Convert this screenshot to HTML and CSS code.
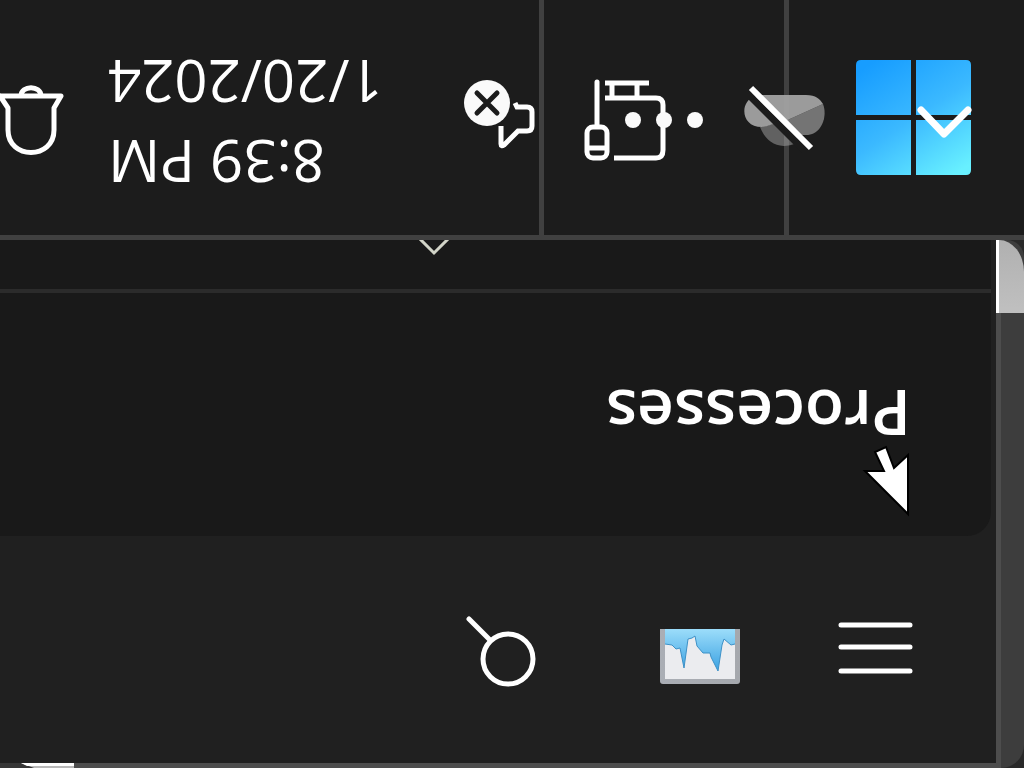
FILE: index.html
```html
<!DOCTYPE html>
<html lang="en">
<head>
<meta charset="utf-8">
<meta name="viewport" content="width=device-width, initial-scale=1">
<title>Task Manager</title>
<link rel="stylesheet" href="styles.css">
</head>
<body>
<div class="screen">
  <header class="taskbar">
    <div class="cell cell-clock">
      <button class="icon-button bell" aria-label="Notifications">
        <svg width="64" height="74" viewBox="0 0 64 74" fill="none" stroke="#fff" stroke-width="5" stroke-linejoin="round" stroke-linecap="round"><path d="M21 15C21 4 41 4 41 15M-2 15H61L54 27V49C54 79 8 79 8 49V27L0 15"/></svg>
      </button>
      <div class="clock">
        <span class="flip clock-text">1/20/2024</span>
        <span class="flip clock-text">8:39 PM</span>
      </div>
      <button class="icon-button network" aria-label="Network and sound">
        <svg width="72" height="78" viewBox="0 0 72 78"><circle cx="24" cy="24" r="23" fill="#fafafa"/><path d="M14 14l20 20M34 14L14 34" stroke="#1c1c1c" stroke-width="5" stroke-linecap="round"/><path d="M52 24L54 28H64Q69 28 69 33V47Q69 52 64 52H55L41 66Q38 68 38 65V47" fill="none" stroke="#fff" stroke-width="5"/></svg>
      </button>
    </div>
    <div class="cell cell-tray">
      <button class="icon-button usb" aria-label="Hidden icons">
        <svg width="124" height="84" viewBox="0 0 124 84" fill="none" stroke="#fff" stroke-width="5"><path d="M13 4V47" stroke-linecap="round"/><rect x="3" y="49" width="20" height="31" rx="6"/><path d="M3 70H23M21 5H65M28 6V19M53 6V19M21 20H72Q79 20 79 27V72Q79 80 72 80H30"/><g fill="#fafafa" stroke="none"><circle cx="49" cy="42" r="8"/><circle cx="80" cy="42" r="8"/><circle cx="111" cy="42" r="8"/></g></svg>
      </button>
      <button class="icon-button cloud" aria-label="OneDrive">
        <svg width="82" height="68" viewBox="0 0 82 68"><g fill="#a5a5a5"><path d="M18 10H62C72 10 76 14 79 19L37 38C32 37 24 42 18 42C-4 42-4 16 10 12Z" opacity=".93"/><path d="M79 19C84 32 77 50 62 50H52L37 38Z" opacity=".65"/><path d="M16 42C22 57 34 66 53 58L37 37C30 37 24 42 16 42Z" opacity=".5"/></g><path d="M2 7L62 67" stroke="#1c1c1c" stroke-width="7"/><path d="M7 3L67 63" stroke="#fff" stroke-width="6"/></svg>
      </button>
    </div>
    <div class="cell cell-start">
      <button class="icon-button start" aria-label="Start">
        <svg width="116" height="116" viewBox="0 0 116 116"><defs><linearGradient id="win" x1="20" y1="0" x2="96" y2="116" gradientUnits="userSpaceOnUse"><stop stop-color="#179dff"/><stop offset=".5" stop-color="#3bb9ff"/><stop offset="1" stop-color="#68f0ff"/></linearGradient></defs><path fill="url(#win)" d="M5 0H55V55H0V5Q0 0 5 0ZM60 0H110Q115 0 115 5V55H60ZM0 60H55V115H5Q0 115 0 110ZM60 60H115V110Q115 115 110 115H60Z"/><path d="M65 50L88 74L112 50" fill="none" stroke="#fff" stroke-width="7" stroke-linecap="round" stroke-linejoin="round"/></svg>
      </button>
    </div>
  </header>

  <main class="desktop">
    <section class="window">
      <div class="panel">
        <div class="panel-top">
          <svg class="chevron" width="34" height="18" viewBox="0 0 34 18"><path d="M2-2L17 13L32-2" fill="none" stroke="#d2d4c8" stroke-width="3"/></svg>
        </div>
        <h1 class="title"><span class="flip">Processes</span></h1>
        <svg class="pointer" width="50" height="74" viewBox="0 0 50 74"><path d="M3 27L46 70V11L32 24L24 3L13 8L22 27Z" fill="#fff" stroke="#000" stroke-width="2"/></svg>
      </div>
      <nav class="toolbar">
        <button class="icon-button search" aria-label="Search">
          <svg width="72" height="76" viewBox="0 -2 72 76" fill="none" stroke="#fff" stroke-width="5" stroke-linecap="round"><circle cx="42" cy="45" r="25"/><path d="M3 5L24 26"/></svg>
        </button>
        <svg class="app-icon" width="80" height="56" viewBox="0 0 80 56"><defs><linearGradient id="wave" x1="0" y1="0" x2="0" y2="1"><stop stop-color="#9cddfa"/><stop offset="1" stop-color="#3ba1e2"/></linearGradient><linearGradient id="frame" x1="0" y1="0" x2="1" y2="0"><stop stop-color="#aaaeb5"/><stop offset="1" stop-color="#a5a8ad"/></linearGradient></defs><path d="M0 0H80V52Q80 55 77 55H3Q0 55 0 52Z" fill="url(#frame)"/><path d="M5 0H75V50H5Z" fill="#ebecef"/><path d="M5 0H75V15L71 16L64 10L62 16L58 42L51 28L50 24H43L37 17L35 7L32 9L28 10L24 39L20 19L16 20L12 16L5 15Z" fill="url(#wave)"/><path d="M5 15L12 16L16 20L20 19L24 39L28 10L32 9L35 7L37 17L43 24H50L51 28L58 42L62 16L64 10L71 16L75 15" fill="none" stroke="#3d91c7"/></svg>
        <button class="icon-button" aria-label="Open navigation">
          <svg width="76" height="58" viewBox="1 0 76 58" stroke="#fff" stroke-width="5" stroke-linecap="round"><path d="M4 4H73M4 26H73M4 50H73"/></svg>
        </button>
      </nav>
      <svg class="corner-glint" width="74" height="5" viewBox="0 0 74 5"><path d="M0 0H74V5H0Z" fill="#363636"/><path d="M21 0H74V5H34Z" fill="#b8b8b8"/><path d="M21 0H74V3H27Z" fill="#fff"/></svg>
    </section>
    <aside class="edge">
      <div class="thumb"></div>
    </aside>
  </main>
</div>
</body>
</html>
```
FILE: styles.css
```css
* {
  box-sizing: border-box;
}

body {
  margin: 0;
  background: #202020;
  color: #fff;
  font-family: "Open Sans", "Noto Sans", sans-serif;
}

.screen {
  display: flex;
  flex-direction: column;
  min-height: 100vh;
  overflow: hidden;
}

.icon-button {
  display: flex;
  flex: none;
  padding: 0;
  border: 0;
  background: none;
}

.icon-button svg {
  display: block;
}

.flip {
  display: inline-block;
  transform: rotate(180deg);
}

.taskbar {
  display: grid;
  grid-template-columns: 544fr 245fr 235fr;
  min-height: 240px;
  background: #1c1c1c;
  border-bottom: 5px solid #404040;
}

.cell {
  display: flex;
  align-items: center;
  min-width: 0;
}

.cell-clock {
  gap: 44px;
  padding-right: 4px;
  border-right: 5px solid #404040;
}

.clock {
  display: flex;
  flex: 1;
  flex-direction: column;
  align-items: flex-start;
  padding-top: 8px;
}

.clock-text {
  font-size: 58px;
  line-height: 80px;
}

.cell-tray {
  position: relative;
  padding-left: 40px;
  padding-top: 4px;
  border-right: 5px solid #404040;
}

.cloud {
  position: absolute;
  top: 85px;
  right: -42px;
}

.cell-start {
  justify-content: flex-end;
  padding-right: 52px;
}

.desktop {
  display: grid;
  grid-template-columns: 1fr 23px;
  flex: 1;
  background: #292929;
}

.window {
  position: relative;
  display: flex;
  flex-direction: column;
  background: #202020;
  border-right: 5px solid #4d4d4d;
  border-bottom: 5px solid #4d4d4d;
}

.panel {
  position: relative;
  min-height: 296px;
  margin-right: 5px;
  background: #191919;
  border-bottom-right-radius: 24px;
}

.panel-top {
  height: 53px;
  padding-left: 417px;
  border-bottom: 4px solid #2b2b2b;
}

.chevron {
  display: block;
}

.title {
  margin: 0;
  padding: 76px 80px 0 0;
  font-size: 64px;
  font-weight: 600;
  line-height: 90px;
  text-align: right;
}

.pointer {
  position: absolute;
  right: 79px;
  bottom: 18px;
}

.toolbar {
  display: flex;
  flex: 1;
  align-items: center;
  justify-content: flex-end;
  padding-right: 82px;
}

.app-icon {
  margin: 14px 98px 0 122px;
}

.corner-glint {
  position: absolute;
  bottom: -5px;
  left: 0;
}

.edge {
  background: #3d3d3d;
  border-radius: 0 24px 32px 0;
}

.thumb {
  position: relative;
  height: 73px;
  margin-left: -5px;
  background: linear-gradient(#b0b0b0, #c0c0c0);
  border-left: 3px solid #fff;
  border-top-right-radius: 25px 32px;
}
```
